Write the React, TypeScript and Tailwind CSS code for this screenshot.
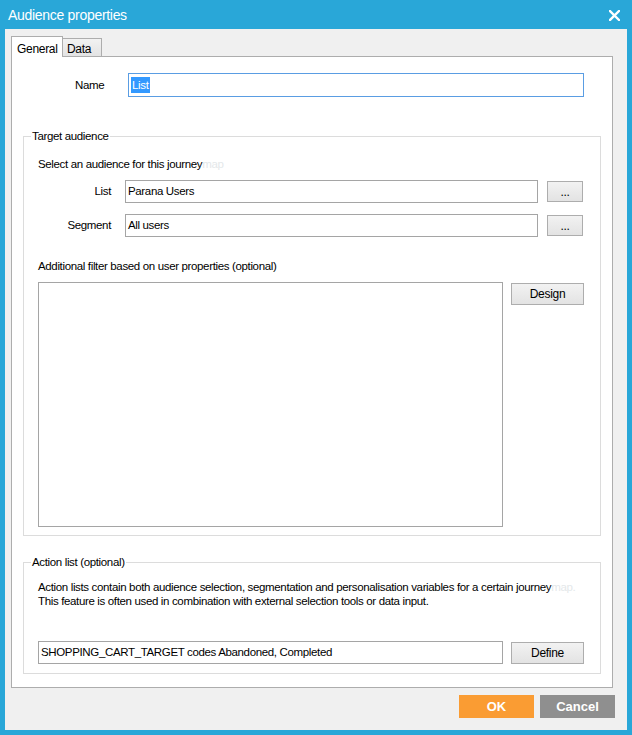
import React from "react";

const font = { fontFamily: '"Liberation Sans", Arial, sans-serif' };
const T = "text-[11.5px] tracking-[-0.35px] whitespace-nowrap";

function Btn({ children, className = "" }: { children: React.ReactNode; className?: string }) {
  return (
    <div
      className={
        "flex items-center justify-center border border-[#adadad] bg-gradient-to-b from-[#f2f2f2] to-[#e3e3e3] text-[12px] tracking-[-0.3px] text-black " +
        className
      }
    >
      {children}
    </div>
  );
}

export default function App() {
  return (
    <div
      className="w-[632px] h-[735px] bg-[#29a7d8] flex flex-col text-[11px] text-black"
      style={font}
    >
      {/* title bar */}
      <div className="h-[29px] flex items-center justify-between pl-[8px] pr-[12px] shrink-0">
        <span className="text-white text-[14px] tracking-[-0.3px] pt-[1px]">Audience properties</span>
        <svg width="11" height="11" viewBox="0 0 11 11" className="mt-[1px]">
          <path d="M1 1 L10 10 M10 1 L1 10" stroke="white" strokeWidth="2.4" strokeLinecap="square" />
        </svg>
      </div>

      {/* body */}
      <div className="flex-1 mx-[5px] mb-[5px] bg-[#f0f0f0] flex flex-col pl-[6px] pr-[14px] pt-[7px]">
        {/* tabs */}
        <div className="flex items-end h-[20px] relative z-10">
          <div className="w-[52px] h-[21px] bg-white border border-[#adadad] border-b-0 flex items-start pl-[5px] pt-[3px] text-[12px] tracking-[-0.3px] -mb-[1px]">
            General
          </div>
          <div className="w-[39px] h-[18px] bg-gradient-to-b from-[#f2f2f2] to-[#e3e3e3] border border-[#adadad] border-l-0 border-b-0 flex items-start pl-[4px] pt-[1px] text-[12px] tracking-[-0.3px]">
            Data
          </div>
        </div>

        {/* panel */}
        <div className="w-[602px] h-[632px] bg-white border border-[#adadad] flex flex-col pl-[11px] pt-[16px]">
          {/* name row */}
          <div className="flex items-center h-[24px]">
            <span className={"w-[105px] pl-[52px] pt-[1px] " + T}>Name</span>
            <div className="w-[456px] h-[24px] border border-[#5a9de3] bg-white flex items-center pl-[2px]">
              <span className={"bg-[#3399ff] text-white px-[1px] leading-[16px] " + T}>List</span>
            </div>
          </div>

          {/* Target audience group */}
          <div className="relative mt-[39px] w-[578px] h-[400px] border border-[#dcdcdc]">
            <span className={"absolute -top-[8px] left-[7px] bg-white px-[1px] leading-[14px] " + T}>
              Target audience
            </span>
            <div className="flex flex-col pl-[14px] pt-[20px]">
              <div className={"leading-[14px] " + T}>
                Select an audience for this journey<span className="text-[#e4e8ea]">map</span>
              </div>
              <div className="flex items-center mt-[9px] h-[23px]">
                <span className={"w-[73px] text-right " + T}>List</span>
                <div className={"ml-[14px] w-[413px] h-[23px] border border-[#a5a5a5] flex items-center pl-[2px] " + T}>
                  Parana Users
                </div>
                <Btn className="ml-[9px] w-[36px] h-[21px]">...</Btn>
              </div>
              <div className="flex items-center mt-[11px] h-[23px]">
                <span className={"w-[73px] text-right " + T}>Segment</span>
                <div className={"ml-[14px] w-[413px] h-[23px] border border-[#a5a5a5] flex items-center pl-[2px] " + T}>
                  All users
                </div>
                <Btn className="ml-[9px] w-[36px] h-[21px]">...</Btn>
              </div>
              <div className={"mt-[22px] leading-[14px] " + T}>
                Additional filter based on user properties (optional)
              </div>
              <div className="flex items-start mt-[9px]">
                <div className="w-[465px] h-[245px] border border-[#a5a5a5]" />
                <Btn className="ml-[8px] mt-[1px] w-[73px] h-[22px]">Design</Btn>
              </div>
            </div>
          </div>

          {/* Action list group */}
          <div className="relative mt-[26px] w-[578px] h-[112px] border border-[#dcdcdc]">
            <span className={"absolute -top-[8px] left-[7px] bg-white px-[1px] leading-[14px] " + T}>
              Action list (optional)
            </span>
            <div className="flex flex-col pl-[14px] pt-[17px]">
              <div className={"leading-[14px] " + T}>
                Action lists contain both audience selection, segmentation and personalisation variables for a certain journey
                <span className="text-[#e4e8ea]">map.</span>
              </div>
              <div className={"leading-[14px] " + T}>
                This feature is often used in combination with external selection tools or data input.
              </div>
              <div className="flex items-center mt-[33px]">
                <div className={"w-[465px] h-[23px] border border-[#a5a5a5] flex items-center pl-[2px] " + T}>
                  SHOPPING_CART_TARGET codes Abandoned, Completed
                </div>
                <Btn className="ml-[8px] w-[73px] h-[22px]">Define</Btn>
              </div>
            </div>
          </div>
        </div>

        {/* bottom buttons */}
        <div className="flex justify-end gap-[6px] mt-[7px] mr-[-2px]">
          <div className="w-[75px] h-[23px] bg-[#fa9c33] text-white font-bold text-[13px] flex items-center justify-center">
            OK
          </div>
          <div className="w-[75px] h-[23px] bg-[#8f8f8f] text-white font-bold text-[13px] flex items-center justify-center">
            Cancel
          </div>
        </div>
      </div>
    </div>
  );
}
